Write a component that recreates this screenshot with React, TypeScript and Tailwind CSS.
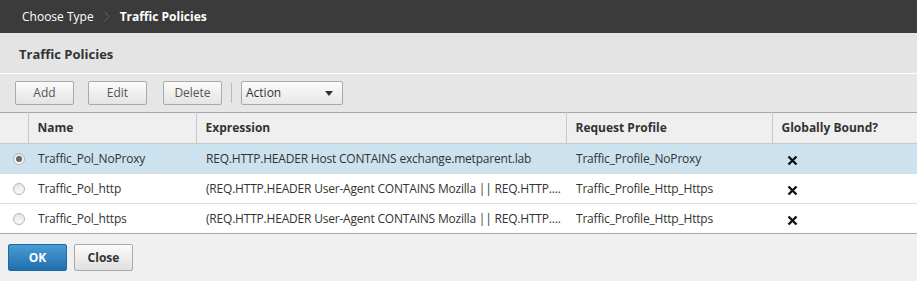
import { useState } from "react";

type PolicyRow = {
  name: string;
  expression: string;
  profile: string;
  bound: boolean;
};

const rows: PolicyRow[] = [
  {
    name: "Traffic_Pol_NoProxy",
    expression: "REQ.HTTP.HEADER Host CONTAINS exchange.metparent.lab",
    profile: "Traffic_Profile_NoProxy",
    bound: false,
  },
  {
    name: "Traffic_Pol_http",
    expression: "(REQ.HTTP.HEADER User-Agent CONTAINS Mozilla || REQ.HTTP....",
    profile: "Traffic_Profile_Http_Https",
    bound: false,
  },
  {
    name: "Traffic_Pol_https",
    expression: "(REQ.HTTP.HEADER User-Agent CONTAINS Mozilla || REQ.HTTP....",
    profile: "Traffic_Profile_Http_Https",
    bound: false,
  },
];

const font = { fontFamily: '"Open Sans", "Noto Sans", Arial, sans-serif' };

function ToolButton({ label }: { label: string }) {
  return (
    <button className="h-[24px] w-[59px] rounded-[2px] border border-[#a9a9a9] bg-gradient-to-b from-[#fbfbfb] to-[#e4e4e4] text-[12px] text-[#555]">
      {label}
    </button>
  );
}

function Radio({ checked }: { checked: boolean }) {
  return (
    <span className="flex h-[12px] w-[12px] items-center justify-center rounded-full border border-[#b5b5b5] bg-gradient-to-b from-[#e6e6e6] to-[#fafafa]">
      {checked && <span className="h-[6px] w-[6px] rounded-full bg-[#666]" />}
    </span>
  );
}

function Cross() {
  return (
    <svg width="11" height="11" viewBox="0 0 11 11">
      <path d="M1.5 1.5 L9.5 9.5 M9.5 1.5 L1.5 9.5" stroke="#111" strokeWidth="2.4" />
    </svg>
  );
}

export default function App() {
  const [selected, setSelected] = useState(0);

  return (
    <div className="flex h-[281px] w-[917px] flex-col overflow-hidden bg-[#f0f0f0]" style={font}>
      {/* breadcrumb */}
      <div className="flex h-[33px] items-center bg-[#3b3b3b] pl-[22px] text-[12px] text-white">
        <span>Choose Type</span>
        <svg className="mx-[10px]" width="6" height="11" viewBox="0 0 6 11">
          <path d="M0.5 0.5 L5 5.5 L0.5 10.5" fill="none" stroke="#666" strokeWidth="1" />
        </svg>
        <span className="font-bold">Traffic Policies</span>
      </div>

      {/* title */}
      <div className="flex h-[41px] items-center border-b border-white bg-[#e4e4e4] pl-[19px] pt-[4px] text-[13px] font-bold text-[#333]">
        Traffic Policies
      </div>

      {/* toolbar */}
      <div className="flex h-[38px] items-center bg-[#e6e6e6] pl-[15px]">
        <ToolButton label="Add" />
        <div className="w-[14px]" />
        <ToolButton label="Edit" />
        <div className="w-[16px]" />
        <ToolButton label="Delete" />
        <div className="mx-[9px] h-[20px] w-px bg-[#b9b9b9]" />
        <div className="flex h-[24px] w-[102px] items-center justify-between rounded-[2px] border border-[#a9a9a9] bg-gradient-to-b from-[#fbfbfb] to-[#e8e8e8] pl-[4px] pr-[9px] text-[12px] text-[#333]">
          <span>Action</span>
          <svg width="8" height="5" viewBox="0 0 8 5">
            <path d="M0 0 H8 L4 5 Z" fill="#333" />
          </svg>
        </div>
      </div>

      {/* table */}
      <table className="w-full table-fixed border-collapse text-left text-[12px] text-[#333]">
        <colgroup>
          <col className="w-[28px]" />
          <col className="w-[168px]" />
          <col className="w-[370px]" />
          <col className="w-[206px]" />
          <col />
        </colgroup>
        <thead>
          <tr className="h-[31px] border-t border-b border-t-[#a8a8a8] border-b-[#c9c9c9] bg-[#efefef]">
            <th />
            <th className="border-l border-[#c9c9c9] pl-[9px] font-bold">Name</th>
            <th className="border-l border-[#c9c9c9] pl-[9px] font-bold">Expression</th>
            <th className="border-l border-[#c9c9c9] pl-[9px] font-bold">Request Profile</th>
            <th className="border-l border-[#c9c9c9] pl-[9px] font-bold">Globally Bound?</th>
          </tr>
        </thead>
        <tbody>
          {rows.map((r, i) => (
            <tr
              key={r.name}
              onClick={() => setSelected(i)}
              className={
                (i === selected ? "bg-[#cde2ef] " : "bg-white ") +
                "h-[30px] border-b " +
                (i === rows.length - 1 ? "border-[#a8a8a8]" : "border-[#dcdcdc]")
              }
            >
              <td className="pl-[13px]">
                <Radio checked={i === selected} />
              </td>
              <td className="pl-[10px] tracking-[-0.2px]">{r.name}</td>
              <td className="whitespace-nowrap pl-[10px] tracking-[-0.2px]">{r.expression}</td>
              <td className="pl-[10px] tracking-[-0.2px]">{r.profile}</td>
              <td className="pl-[15px] pt-[3px]">{!r.bound && <Cross />}</td>
            </tr>
          ))}
        </tbody>
      </table>

      {/* footer */}
      <div className="flex gap-[7px] pl-[8px] pt-[10px]">
        <button className="h-[27px] w-[59px] rounded-[2px] border border-[#1e6aa3] bg-gradient-to-b from-[#4a9ad3] to-[#1f70ad] text-[12px] font-bold text-white">
          OK
        </button>
        <button className="h-[27px] w-[59px] rounded-[2px] border border-[#a9a9a9] bg-gradient-to-b from-[#fbfbfb] to-[#e0e0e0] text-[12px] font-bold text-[#333]">
          Close
        </button>
      </div>
    </div>
  );
}
